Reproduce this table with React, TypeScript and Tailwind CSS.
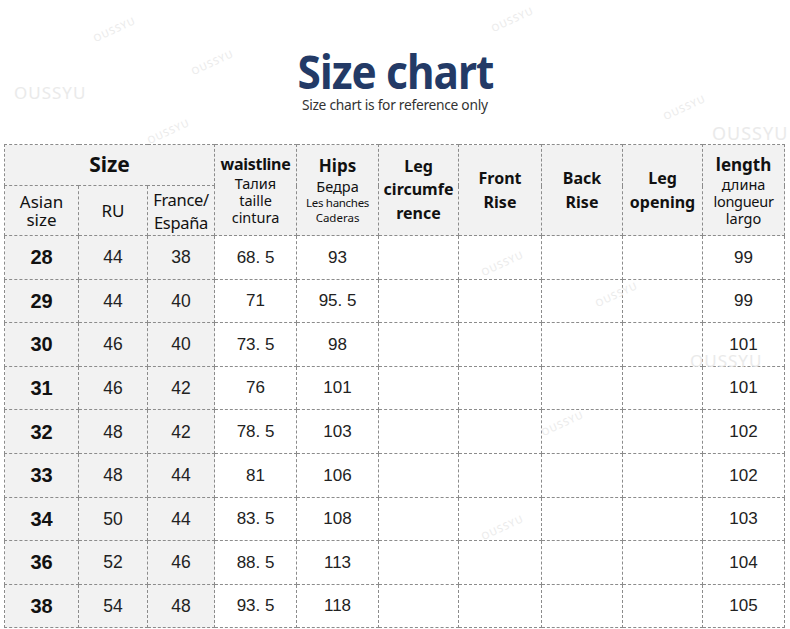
import React from 'react';

const rows = [
  ['28', '44', '38', '68. 5', '93', '99'],
  ['29', '44', '40', '71', '95. 5', '99'],
  ['30', '46', '40', '73. 5', '98', '101'],
  ['31', '46', '42', '76', '101', '101'],
  ['32', '48', '42', '78. 5', '103', '102'],
  ['33', '48', '44', '81', '106', '102'],
  ['34', '50', '44', '83. 5', '108', '103'],
  ['36', '52', '46', '88. 5', '113', '104'],
  ['38', '54', '48', '93. 5', '118', '105'],
];

const colWidths = [74, 69, 67, 82, 82, 80, 83, 81, 80, 82];

// faint shop watermarks, kept to the empty spots
const marks = [
  { x: 92, y: 22, size: 'text-[10px]', rot: '-rotate-[25deg]' },
  { x: 490, y: 12, size: 'text-[10px]', rot: '-rotate-[25deg]' },
  { x: 190, y: 55, size: 'text-[10px]', rot: '-rotate-[25deg]' },
  { x: 662, y: 100, size: 'text-[10px]', rot: '-rotate-[25deg]' },
  { x: 146, y: 124, size: 'text-[10px]', rot: '-rotate-[25deg]' },
  { x: 14, y: 80, size: 'text-[17px]', rot: '' },
  { x: 712, y: 120, size: 'text-[18px]', rot: '' },
  { x: 690, y: 348, size: 'text-[17px]', rot: '' },
  { x: 480, y: 256, size: 'text-[10px]', rot: '-rotate-[25deg]' },
  { x: 594, y: 287, size: 'text-[10px]', rot: '-rotate-[25deg]' },
  { x: 540, y: 416, size: 'text-[10px]', rot: '-rotate-[25deg]' },
  { x: 480, y: 520, size: 'text-[10px]', rot: '-rotate-[25deg]' },
];

const sans = "font-['Noto_Sans','Open_Sans',sans-serif]";
const num = "font-['Liberation_Sans',Arial,sans-serif]";
const cell = 'border border-dashed border-[#8c8c8c] text-center align-middle p-0';

export default function App() {
  return (
    <div className="relative w-[790px] h-[629px] overflow-hidden bg-white text-[#111]">
      <div className="flex flex-col items-center pt-[47px]">
        <h1 className={`${sans} text-[46px] leading-[49px] font-bold text-[#233a66] tracking-[-1px] scale-x-[0.92]`}>
          Size chart
        </h1>
        <p className={`${sans} text-[14.5px] leading-[17px] text-[#333] tracking-[-0.3px] scale-x-[0.95]`}>
          Size chart is for reference only
        </p>
      </div>

      <div className="pl-[4px] pt-[31px]">
        <table className="table-fixed border-collapse w-[780px]">
          <colgroup>
            {colWidths.map((w, i) => (
              <col key={i} style={{ width: w }} />
            ))}
          </colgroup>
          <thead className={sans}>
            <tr className="h-[41px] bg-[#f2f2f2]">
              <th colSpan={3} className={`${cell} text-[21px] font-bold`}>Size</th>
              <th rowSpan={2} className={`${cell} font-normal`}>
                <div className="text-[16px] font-bold leading-[21px] tracking-[-0.3px]">waistline</div>
                <div className="text-[14.5px] leading-[17px]">Талия</div>
                <div className="text-[14.5px] leading-[17px]">taille</div>
                <div className="text-[14.5px] leading-[17px]">cintura</div>
              </th>
              <th rowSpan={2} className={`${cell} font-normal`}>
                <div className="text-[17px] font-bold leading-[22px]">Hips</div>
                <div className="text-[14.5px] leading-[18px]">Бедра</div>
                <div className="text-[11.5px] leading-[15px] tracking-[-0.3px]">Les hanches</div>
                <div className="text-[11.5px] leading-[15px]">Caderas</div>
              </th>
              <th rowSpan={2} className={`${cell} text-[16px] font-bold leading-[23.5px]`}>
                Leg
                <br />
                circumfe
                <br />
                rence
              </th>
              <th rowSpan={2} className={`${cell} text-[16px] font-bold leading-[24px]`}>
                Front
                <br />
                Rise
              </th>
              <th rowSpan={2} className={`${cell} text-[16px] font-bold leading-[24px]`}>
                Back
                <br />
                Rise
              </th>
              <th rowSpan={2} className={`${cell} text-[16px] font-bold leading-[24px]`}>
                Leg
                <br />
                opening
              </th>
              <th rowSpan={2} className={`${cell} font-normal`}>
                <div className="text-[17px] font-bold leading-[22px]">length</div>
                <div className="text-[14.5px] leading-[17px]">длина</div>
                <div className="text-[14.5px] leading-[17px] tracking-[-0.3px]">longueur</div>
                <div className="text-[14.5px] leading-[17px]">largo</div>
              </th>
            </tr>
            <tr className="h-[50px] bg-[#f2f2f2]">
              <th className={`${cell} text-[17px] font-normal leading-[18px]`}>
                Asian
                <br />
                size
              </th>
              <th className={`${cell} text-[17px] font-normal`}>RU</th>
              <th className={`${cell} text-[16.5px] font-normal leading-[23px] tracking-[-0.3px]`}>
                France/
                <br />
                España
              </th>
            </tr>
          </thead>
          <tbody className={num}>
            {rows.map((r) => (
              <tr key={r[0]} className="h-[43.6px]">
                <td className={`${cell} bg-[#f2f2f2] text-[20px] font-bold`}>{r[0]}</td>
                <td className={`${cell} bg-[#f2f2f2] text-[17.5px] text-[#222]`}>{r[1]}</td>
                <td className={`${cell} bg-[#f2f2f2] text-[17.5px] text-[#222]`}>{r[2]}</td>
                <td className={`${cell} text-[17px] text-[#222]`}>{r[3]}</td>
                <td className={`${cell} text-[17px] text-[#222]`}>{r[4]}</td>
                <td className={cell}></td>
                <td className={cell}></td>
                <td className={cell}></td>
                <td className={cell}></td>
                <td className={`${cell} text-[17px] text-[#222]`}>{r[5]}</td>
              </tr>
            ))}
          </tbody>
        </table>
      </div>

      {marks.map((m, i) => (
        <span
          key={i}
          className={`pointer-events-none absolute ${sans} ${m.size} ${m.rot} tracking-[1px] text-[#e6e6e6] opacity-80`}
          style={{ left: m.x, top: m.y }}
        >
          OUSSYU
        </span>
      ))}
    </div>
  );
}
